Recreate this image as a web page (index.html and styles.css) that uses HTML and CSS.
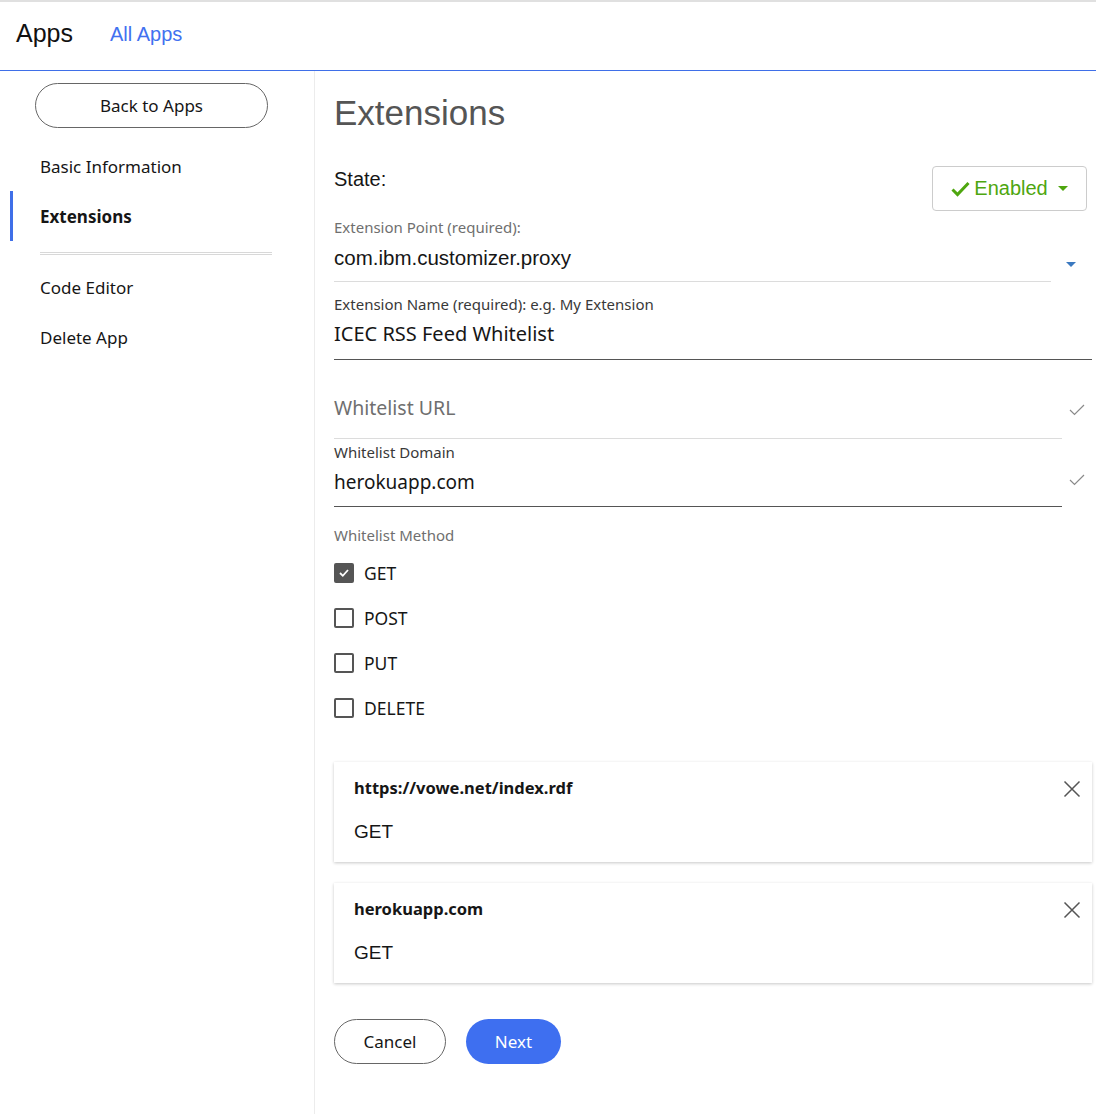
FILE: index.html
```html
<!DOCTYPE html>
<html>
<head>
<meta charset="utf-8">
<link rel="stylesheet" href="styles.css">
</head>
<body>
<header class="topbar">
  <span class="brand">Apps</span>
  <a class="all-apps">All Apps</a>
</header>
<div class="layout">
  <aside class="sidebar">
    <button class="back-btn">Back to Apps</button>
    <nav class="nav">
      <div class="nav-item">Basic Information</div>
      <div class="nav-item active">Extensions</div>
      <div class="nav-sep"></div>
      <div class="nav-item">Code Editor</div>
      <div class="nav-item">Delete App</div>
    </nav>
  </aside>
  <main class="main">
    <h1 class="title">Extensions</h1>
    <div class="state-row">
      <span class="state-label">State:</span>
      <button class="state-btn">
        <svg class="check-green" width="19" height="16" viewBox="0 0 19 16"><path d="M1.5 8.5 L6.5 13.5 L17.5 2" fill="none" stroke="#4ea60f" stroke-width="3"/></svg>
        <span>Enabled</span>
        <span class="caret-green"></span>
      </button>
    </div>
    <div class="field point-field">
      <div class="label muted">Extension Point (required):</div>
      <div class="select-row">
        <div class="value arial light-line">com.ibm.customizer.proxy</div>
        <span class="caret-blue"></span>
      </div>
    </div>
    <div class="field name-field">
      <div class="label">Extension Name (required): e.g. My Extension</div>
      <div class="value dark-line">ICEC RSS Feed Whitelist</div>
    </div>
    <div class="field url-field">
      <div class="check-row">
        <div class="value placeholder light-line">Whitelist URL</div>
        <svg class="thin-check" width="16" height="12" viewBox="0 0 16 12"><path d="M1 6 L5.5 10.5 L15 1" fill="none" stroke="#8a8a8a" stroke-width="1.2"/></svg>
      </div>
    </div>
    <div class="field domain-field">
      <div class="label">Whitelist Domain</div>
      <div class="check-row">
        <div class="value dark-line">herokuapp.com</div>
        <svg class="thin-check" width="16" height="12" viewBox="0 0 16 12"><path d="M1 6 L5.5 10.5 L15 1" fill="none" stroke="#8a8a8a" stroke-width="1.2"/></svg>
      </div>
    </div>
    <div class="label muted method-label">Whitelist Method</div>
    <div class="checks">
      <label class="cb-row"><span class="cb checked"><svg width="12" height="10" viewBox="0 0 12 10"><path d="M2 5 L4.8 7.8 L10 2" fill="none" stroke="#fff" stroke-width="1.8"/></svg></span>GET</label>
      <label class="cb-row"><span class="cb"></span>POST</label>
      <label class="cb-row"><span class="cb"></span>PUT</label>
      <label class="cb-row"><span class="cb"></span>DELETE</label>
    </div>
    <div class="cards">
      <div class="card">
        <div class="card-title">https://vowe.net/index.rdf</div>
        <div class="card-method">GET</div>
        <svg class="close" width="18" height="18" viewBox="0 0 18 18"><path d="M1.5 1.5 L16.5 16.5 M16.5 1.5 L1.5 16.5" stroke="#555" stroke-width="1.5"/></svg>
      </div>
      <div class="card">
        <div class="card-title">herokuapp.com</div>
        <div class="card-method">GET</div>
        <svg class="close" width="18" height="18" viewBox="0 0 18 18"><path d="M1.5 1.5 L16.5 16.5 M16.5 1.5 L1.5 16.5" stroke="#555" stroke-width="1.5"/></svg>
      </div>
    </div>
    <div class="actions">
      <button class="btn cancel">Cancel</button>
      <button class="btn next">Next</button>
    </div>
  </main>
</div>
</body>
</html>
```
FILE: styles.css
```css
* { box-sizing: border-box; }
html, body { margin: 0; padding: 0; background: #fff; }
body {
  font-family: "Noto Sans", "Liberation Sans", sans-serif;
  color: #161616;
  border-top: 2px solid #e0e0e0;
  height: 1114px;
  overflow: hidden;
}
.topbar {
  height: 69px;
  border-bottom: 1px solid #3f6fe8;
  display: flex;
  align-items: center;
  padding-left: 16px;
  padding-bottom: 5px;
}
.brand {
  font-family: "Liberation Sans", Arial, sans-serif;
  font-size: 25px;
  color: #111;
}
.all-apps {
  font-family: "Liberation Sans", Arial, sans-serif;
  font-size: 20px;
  color: #4271f0;
  margin-left: 37px;
  margin-top: 2px;
}
.layout { display: flex; }
.sidebar {
  width: 315px;
  flex: none;
  border-right: 1px solid #ececec;
  min-height: 1045px;
  padding-top: 12px;
}
.back-btn {
  display: block;
  margin-left: 35px;
  width: 233px;
  height: 45px;
  border: 1px solid #666;
  border-radius: 23px;
  background: #fff;
  font-family: "Noto Sans", sans-serif;
  font-size: 17px;
  color: #161616;
  padding: 0;
}
.nav { margin-top: 13px; }
.nav-item {
  height: 50px;
  display: flex;
  align-items: center;
  padding-left: 27px;
  margin-left: 10px;
  border-left: 3px solid transparent;
  font-size: 17px;
  color: #161616;
}
.nav-item.active {
  border-left-color: #3f6fe8;
  font-weight: 700;
}
.nav-sep {
  margin: 11px 0 7px 40px;
  width: 232px;
  height: 3px;
  border-top: 1px solid #d8d8d8;
  border-bottom: 1px solid #d8d8d8;
}
.main {
  flex: 1;
  padding: 0 4px 0 19px;
}
.title {
  font-family: "Liberation Sans", Arial, sans-serif;
  font-weight: 400;
  font-size: 35px;
  color: #555;
  margin: 22px 0 0 0;
  line-height: 40px;
}
.state-row {
  display: flex;
  justify-content: space-between;
  align-items: flex-start;
  margin-top: 33px;
  padding-right: 5px;
}
.state-label {
  font-family: "Liberation Sans", Arial, sans-serif;
  font-size: 20px;
  line-height: 24px;
  margin-top: 1px;
}
.state-btn {
  width: 155px;
  height: 45px;
  border: 1px solid #ccc;
  border-radius: 4px;
  background: #fff;
  display: flex;
  align-items: center;
  justify-content: center;
  gap: 4px;
  font-family: "Liberation Sans", Arial, sans-serif;
  font-size: 20px;
  color: #4ea60f;
  padding: 0;
}
.caret-green {
  width: 0; height: 0;
  border-left: 5px solid transparent;
  border-right: 5px solid transparent;
  border-top: 5px solid #4ea60f;
  margin-left: 6px;
}
.label {
  font-size: 15px;
  color: #393939;
  line-height: 20px;
}
.label.muted { color: #6f6f6f; }
.value {
  font-size: 19px;
  line-height: 26px;
  color: #161616;
}
.value.arial { font-family: "Liberation Sans", Arial, sans-serif; font-size: 20.5px; }
.light-line { border-bottom: 1px solid #dcdcdc; }
.dark-line { border-bottom: 1px solid #555; }

.point-field { margin-top: 6px; }
.point-field .value { padding: 8px 0 10px 0; width: 717px; }
.select-row { display: flex; align-items: flex-start; }
.caret-blue {
  width: 0; height: 0;
  border-left: 5px solid transparent;
  border-right: 5px solid transparent;
  border-top: 5px solid #3b79c0;
  margin-left: 15px;
  margin-top: 25px;
}

.name-field { margin-top: 12px; }
.name-field .value { padding: 7px 0 12px 0; font-size: 20px; }

.url-field { margin-top: 27px; }
.url-field .value { padding: 8px 0 17px 0; font-size: 19.5px; }
.placeholder { color: #6f6f6f; }
.check-row { display: flex; align-items: flex-start; }
.check-row .value { width: 728px; }
.thin-check { margin-left: 7px; }
.url-field .thin-check { margin-top: 17px; }

.domain-field { margin-top: 3px; }
.domain-field .value { padding: 7px 0 11px 0; }
.domain-field .thin-check { margin-top: 12px; }

.method-label { margin-top: 18px; }
.checks { margin-top: 5px; }
.cb-row {
  display: flex;
  align-items: center;
  height: 45px;
  font-size: 17.5px;
  color: #161616;
}
.cb {
  width: 20px; height: 20px;
  border: 2px solid #555;
  border-radius: 2px;
  margin-right: 10px;
  display: flex;
  align-items: center;
  justify-content: center;
}
.cb.checked { background: #555; border-color: #555; }
.cards { margin-top: 32px; display: flex; flex-direction: column; gap: 21px; }
.card {
  position: relative;
  height: 100px;
  background: #fff;
  box-shadow: 0 1px 3px rgba(0,0,0,0.22);
  padding: 15px 20px;
}
.card-title {
  font-size: 16.5px;
  font-weight: 700;
  line-height: 22px;
}
.card-method {
  font-family: "Liberation Sans", Arial, sans-serif;
  font-size: 19px;
  line-height: 22px;
  margin-top: 22px;
}
.close { position: absolute; right: 11px; top: 18px; }
.actions { display: flex; gap: 20px; margin-top: 36px; }
.btn {
  height: 45px;
  border-radius: 23px;
  font-family: "Noto Sans", sans-serif;
  font-size: 17px;
  padding: 0;
}
.cancel { width: 112px; background: #fff; border: 1px solid #666; color: #161616; }
.next { width: 95px; background: #3e6ff0; border: none; color: #fff; }
```
